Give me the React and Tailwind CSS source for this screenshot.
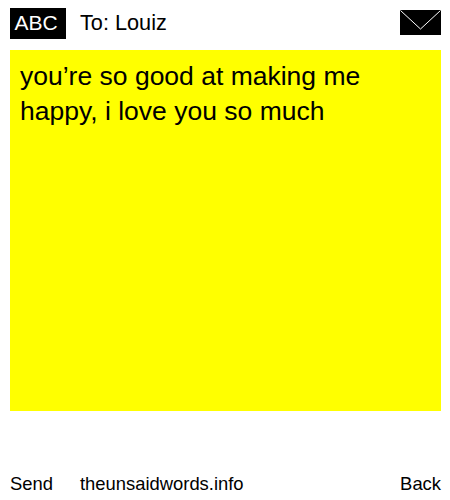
export default function App() {
  return (
    <div className="w-[450px] h-[500px] bg-white text-black font-['Liberation_Sans',Arial,sans-serif] flex flex-col pl-2.5 pr-[9px] pt-2">
      {/* header */}
      <div className="flex items-center h-[31px]">
        <div className="w-14 h-[31px] pb-0.5 pr-1 bg-black text-white text-[21px] flex items-center justify-center">ABC</div>
        <div className="ml-3.5 -mt-0.5 text-[21.7px] leading-[30px]">To: Louiz</div>
        <svg className="ml-auto -mt-0.5" width="41" height="25" viewBox="0 0 41 25">
          <rect width="41" height="25" fill="#000" />
          <path d="M0.5 0.5 L20.5 19 L40.5 0.5" fill="none" stroke="#fff" strokeWidth="1" />
        </svg>
      </div>

      {/* message */}
      <div className="mt-[11px] h-[361px] bg-[#ffff00] px-2.5 pt-[9px] text-[26.5px] leading-[35px]">
        you’re so good at making me happy, i love you so much
      </div>

      {/* footer */}
      <div className="mt-[63px] flex items-center text-[18.4px] leading-5">
        <span className="w-[70px]">Send</span>
        <span>theunsaidwords.info</span>
        <span className="ml-auto">Back</span>
      </div>
    </div>
  )
}
